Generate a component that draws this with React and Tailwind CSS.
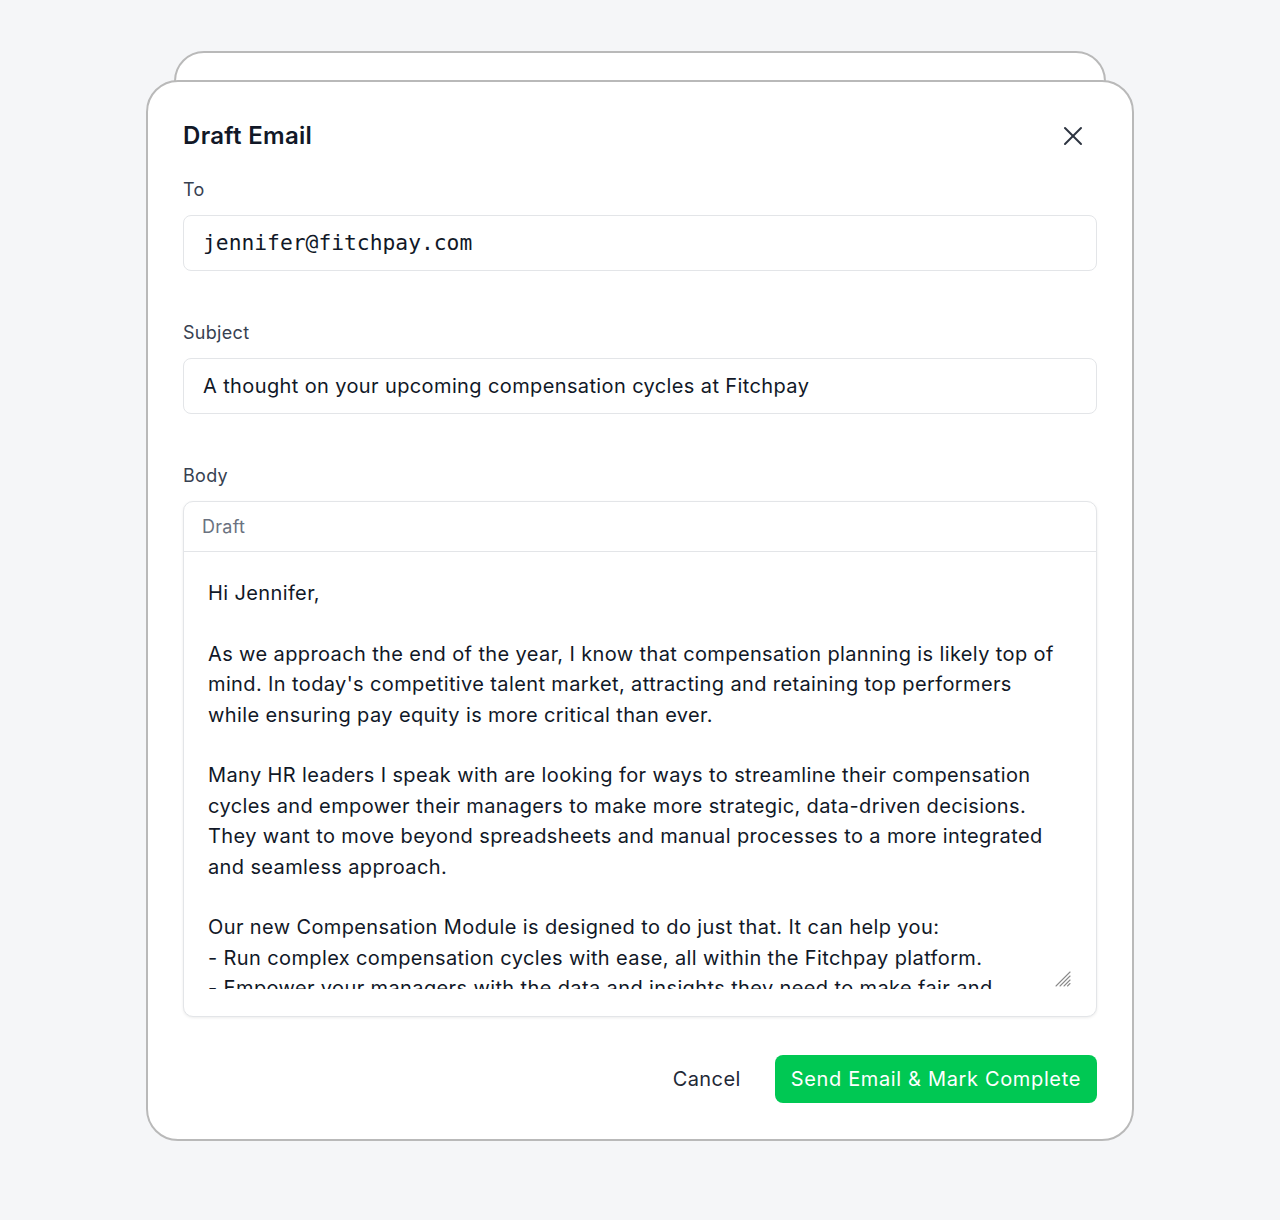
import React from "react";
import { X } from "lucide-react";

const BODY = `Hi Jennifer,

As we approach the end of the year, I know that compensation planning is likely top of mind. In today's competitive talent market, attracting and retaining top performers while ensuring pay equity is more critical than ever.

Many HR leaders I speak with are looking for ways to streamline their compensation cycles and empower their managers to make more strategic, data-driven decisions. They want to move beyond spreadsheets and manual processes to a more integrated and seamless approach.

Our new Compensation Module is designed to do just that. It can help you:
- Run complex compensation cycles with ease, all within the Fitchpay platform.
- Empower your managers with the data and insights they need to make fair and competitive decisions.
- Ensure pay equity across your organization with built-in analytics.

Would you be open to a quick 15-minute chat next week to see if it could be a fit?

Best,
Alex`;

export default function App() {
  return (
    <div
      className="min-h-[1220px] w-full bg-[#f5f6f8] pt-[51px]"
      style={{ fontFamily: "Inter, 'Noto Sans', sans-serif" }}
    >
      <div className="relative mx-auto w-[988px] pt-[29px]">
        <div className="absolute left-[28px] right-[28px] top-0 h-[100px] rounded-[30px] border-2 border-[#b9b9b9] bg-white" />
        <div className="relative rounded-[32px] border-2 border-[#b9b9b9] bg-white px-[35px] pb-[36px] pt-[38px]">
          <div className="flex h-[32px] items-center justify-between">
            <h2 className="text-[24px] font-semibold leading-[32px] tracking-[0.3px] text-[#111827]">Draft Email</h2>
            <button className="mr-[8px] text-[#2d3440]">
              <X size={32} strokeWidth={1.5} />
            </button>
          </div>

          <div className="mt-[25px] text-[18px] leading-[26px] tracking-[0.3px] text-[#374151]">To</div>
          <div className="mt-[12px] flex h-[56px] items-center rounded-[8px] border border-[#e3e5e8] px-[19px]">
            <span
              className="text-[21.3px] text-[#111827]"
              style={{ fontFamily: "'DejaVu Sans Mono', monospace" }}
            >
              jennifer@fitchpay.com
            </span>
          </div>

          <div className="mt-[49px] text-[18px] leading-[26px] tracking-[0.3px] text-[#374151]">Subject</div>
          <div className="mt-[12px] flex h-[56px] items-center rounded-[8px] border border-[#e3e5e8] px-[19px]">
            <span className="text-[20px] tracking-[0.38px] text-[#111827]">
              A thought on your upcoming compensation cycles at Fitchpay
            </span>
          </div>

          <div className="mt-[49px] text-[18px] leading-[26px] tracking-[0.3px] text-[#374151]">Body</div>
          <div className="mt-[12px] rounded-[10px] border border-[#e3e5e8] bg-white shadow-[0_1px_3px_rgba(0,0,0,0.08)]">
            <div className="flex h-[50px] items-center border-b border-[#e3e5e8] px-[18px] text-[18px] tracking-[0.3px] text-[#6b7280]">
              Draft
            </div>
            <div className="px-[24px] pb-[27px] pt-[26px]">
              <div className="relative">
                <textarea
                  readOnly
                  value={BODY}
                  className="block h-[411px] w-full resize-none overflow-hidden border-0 bg-transparent py-0 pl-0 pr-[10px] text-[20px] leading-[30.4px] tracking-[0.38px] text-[#111827] outline-none"
                  style={{ fontFamily: "Inter, 'Noto Sans', sans-serif" }}
                />
                <svg
                  className="absolute bottom-[2px] right-[1px]"
                  width="16"
                  height="16"
                  viewBox="0 0 16 16"
                  fill="none"
                  stroke="#8a8a8a"
                  strokeWidth="1.1"
                  strokeLinecap="round"
                >
                  <line x1="1" y1="15" x2="15" y2="1" />
                  <line x1="5" y1="15" x2="15" y2="5" />
                  <line x1="9" y1="15" x2="15" y2="9" />
                  <line x1="12.5" y1="15" x2="15" y2="12.5" />
                </svg>
              </div>
            </div>
          </div>

          <div className="mt-[38px] flex items-center justify-end gap-[18px]">
            <button className="px-[16px] text-[20px] tracking-[0.4px] text-[#1f2937]">Cancel</button>
            <button className="h-[48px] rounded-[8px] bg-[#00c853] px-[16px] text-[20px] tracking-[0.65px] text-white">
              Send Email &amp; Mark Complete
            </button>
          </div>
        </div>
      </div>
    </div>
  );
}
